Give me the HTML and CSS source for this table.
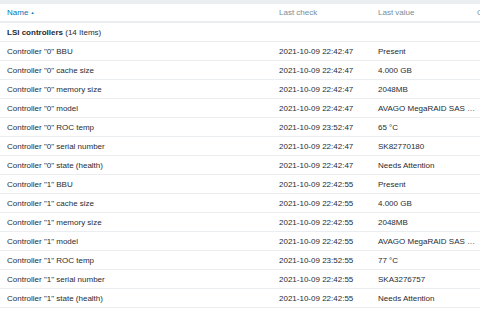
FILE: index.html
```html
<!DOCTYPE html>
<html lang="en">
<head>
    <meta charset="UTF-8">
    <title>Latest data</title>
    <link rel="stylesheet" href="styles.css">
</head>
<body>
    <div class="top-bar"></div>

    <!-- Latest data table -->
    <table class="list-table">
        <thead>
            <tr>
                <th class="col-name"><a href="#">Name <span class="arrow">&#9650;</span></a></th>
                <th class="col-check">Last check</th>
                <th class="col-value">Last value</th>
                <th class="col-change">C</th>
            </tr>
        </thead>
        <tbody>
            <tr class="group-row">
                <td colspan="4"><b>LSI controllers</b> (14 Items)</td>
            </tr>
            <tr><td>Controller "0" BBU</td><td>2021-10-09 22:42:47</td><td>Present</td><td></td></tr>
            <tr><td>Controller "0" cache size</td><td>2021-10-09 22:42:47</td><td>4.000 GB</td><td></td></tr>
            <tr><td>Controller "0" memory size</td><td>2021-10-09 22:42:47</td><td>2048MB</td><td></td></tr>
            <tr><td>Controller "0" model</td><td>2021-10-09 22:42:47</td><td>AVAGO MegaRAID SAS &hellip;</td><td></td></tr>
            <tr><td>Controller "0" ROC temp</td><td>2021-10-09 23:52:47</td><td>65 &deg;C</td><td></td></tr>
            <tr><td>Controller "0" serial number</td><td>2021-10-09 22:42:47</td><td>SK82770180</td><td></td></tr>
            <tr><td>Controller "0" state (health)</td><td>2021-10-09 22:42:47</td><td>Needs Attention</td><td></td></tr>
            <tr><td>Controller "1" BBU</td><td>2021-10-09 22:42:55</td><td>Present</td><td></td></tr>
            <tr><td>Controller "1" cache size</td><td>2021-10-09 22:42:55</td><td>4.000 GB</td><td></td></tr>
            <tr><td>Controller "1" memory size</td><td>2021-10-09 22:42:55</td><td>2048MB</td><td></td></tr>
            <tr><td>Controller "1" model</td><td>2021-10-09 22:42:55</td><td>AVAGO MegaRAID SAS &hellip;</td><td></td></tr>
            <tr><td>Controller "1" ROC temp</td><td>2021-10-09 23:52:55</td><td>77 &deg;C</td><td></td></tr>
            <tr><td>Controller "1" serial number</td><td>2021-10-09 22:42:55</td><td>SKA3276757</td><td></td></tr>
            <tr><td>Controller "1" state (health)</td><td>2021-10-09 22:42:55</td><td>Needs Attention</td><td></td></tr>
        </tbody>
    </table>
</body>
</html>
```

FILE: styles.css
```css
/* Page basics */
body {
    margin: 0;
    background-color: #ffffff;
    font-family: "Liberation Sans", Arial, sans-serif;
    font-size: 8px;
    color: #1f2c33;
    overflow: hidden;
}

/* Grey strip along the top */
.top-bar {
    height: 4px;
    background-color: #ebeef0;
}

/* Table */
.list-table {
    width: 100%;
    border-collapse: collapse;
    table-layout: fixed;
}

.list-table th,
.list-table td {
    height: 18px;
    padding: 0 7px;
    text-align: left;
    white-space: nowrap;
    border-bottom: 1px solid #ebeef0;
}

.list-table th {
    font-weight: normal;
    color: #768d99;
    border-bottom: 2px solid #ebeef0;
    height: 17px;
}

.list-table th a {
    color: #0275b8;
    text-decoration: none;
}

.arrow {
    font-size: 4px;
    vertical-align: middle;
}

.col-name { width: 258px; }
.col-check { width: 85px; }
.col-value { width: 85px; }

.group-row td {
    color: #1f2c33;
}
```
